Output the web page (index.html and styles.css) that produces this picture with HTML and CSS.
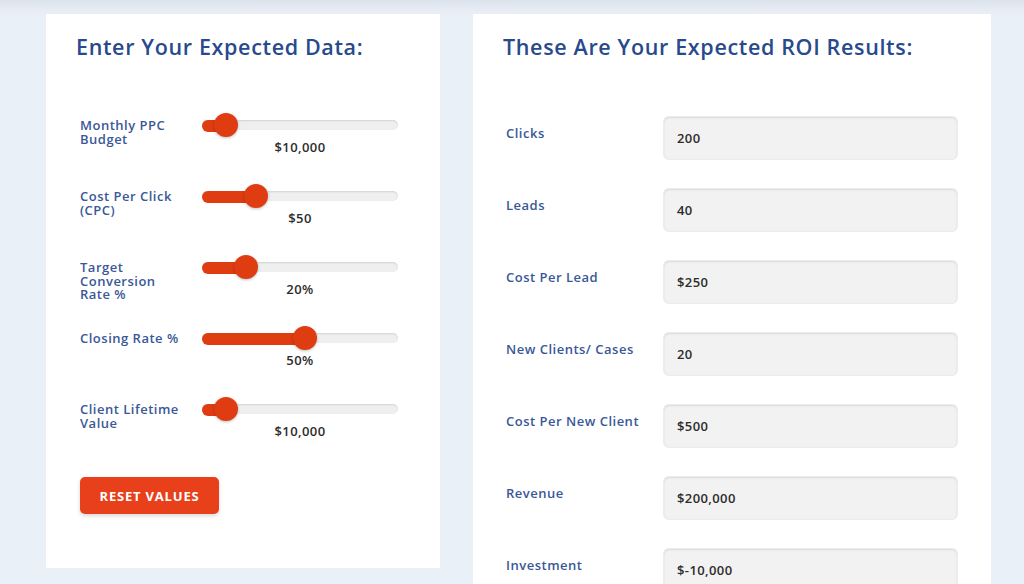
FILE: index.html
```html
<!DOCTYPE html>
<html lang="en">
<head>
  <meta charset="UTF-8">
  <meta name="viewport" content="width=device-width, initial-scale=1.0">
  <title>PPC ROI Calculator</title>
  <link rel="stylesheet" href="styles.css">
</head>
<body>
  <div class="calc">
    <div class="card card-input">
      <h2>Enter Your Expected Data:</h2>
      <div class="sliders">
        <div class="row">
          <div class="label">Monthly PPC<br>Budget</div>
          <div class="slider">
            <div class="track"><div class="fill" style="width: 24px"></div><span class="thumb" style="left: 24px"></span></div>
            <div class="value">$10,000</div>
          </div>
        </div>
        <div class="row">
          <div class="label">Cost Per Click<br>(CPC)</div>
          <div class="slider">
            <div class="track"><div class="fill" style="width: 54px"></div><span class="thumb" style="left: 54px"></span></div>
            <div class="value">$50</div>
          </div>
        </div>
        <div class="row">
          <div class="label">Target<br>Conversion<br>Rate %</div>
          <div class="slider">
            <div class="track"><div class="fill" style="width: 44px"></div><span class="thumb" style="left: 44px"></span></div>
            <div class="value">20%</div>
          </div>
        </div>
        <div class="row">
          <div class="label">Closing Rate %</div>
          <div class="slider">
            <div class="track"><div class="fill" style="width: 103px"></div><span class="thumb" style="left: 103px"></span></div>
            <div class="value">50%</div>
          </div>
        </div>
        <div class="row">
          <div class="label">Client Lifetime<br>Value</div>
          <div class="slider">
            <div class="track"><div class="fill" style="width: 24px"></div><span class="thumb" style="left: 24px"></span></div>
            <div class="value">$10,000</div>
          </div>
        </div>
      </div>
      <button class="btn-reset">RESET VALUES</button>
    </div>

    <div class="card card-result">
      <h2>These Are Your Expected ROI Results:</h2>
      <div class="results">
        <div class="res-row"><div class="label">Clicks</div><div class="box">200</div></div>
        <div class="res-row"><div class="label">Leads</div><div class="box">40</div></div>
        <div class="res-row"><div class="label">Cost Per Lead</div><div class="box">$250</div></div>
        <div class="res-row"><div class="label">New Clients/ Cases</div><div class="box">20</div></div>
        <div class="res-row"><div class="label">Cost Per New Client</div><div class="box">$500</div></div>
        <div class="res-row"><div class="label">Revenue</div><div class="box">$200,000</div></div>
        <div class="res-row"><div class="label">Investment</div><div class="box">$-10,000</div></div>
      </div>
    </div>
  </div>
</body>
</html>
```
FILE: styles.css
```css
* {
  margin: 0;
  padding: 0;
  box-sizing: border-box;
}
body {
  height: 584px;
  overflow: hidden;
  font-family: "Open Sans", "Liberation Sans", sans-serif;
  background: linear-gradient(#dde3ec 0, #e9eef6 12px, #eaf0f8 20px);
}
.calc {
  display: flex;
  align-items: flex-start;
  gap: 33px;
  padding: 14px 0 0 46px;
}
.card {
  background: #fff;
  padding: 21px 30px 0;
}
.card h2 {
  font-size: 21.5px;
  line-height: 24px;
  font-weight: 600;
  color: #284a8c;
  letter-spacing: 0.65px;
}
.card-input {
  width: 394px;
  height: 554px;
}
.card-result {
  width: 518px;
  height: 600px;
}
.label {
  font-size: 13px;
  line-height: 13.5px;
  font-weight: 600;
  color: #3a5897;
  letter-spacing: 0.5px;
}

/* sliders */
.sliders {
  margin-top: 55px;
  padding-left: 4px;
}
.row {
  display: grid;
  grid-template-columns: 122px 196px;
  height: 71px;
}
.row .label {
  padding-top: 5px;
}
.slider {
  padding-top: 7px;
}
.track {
  position: relative;
  height: 10px;
  border-radius: 5px;
  background: #efefef;
  box-shadow: inset 0 1px 2px rgba(0, 0, 0, 0.12);
}
.fill {
  height: 12px;
  margin-top: -1px;
  border-radius: 6px;
  background: #e03c12;
}
.thumb {
  position: absolute;
  top: -7px;
  width: 24px;
  height: 24px;
  margin-left: -12px;
  border-radius: 50%;
  background: #e03c12;
  box-shadow: 0 1px 3px rgba(0, 0, 0, 0.25);
}
.value {
  margin-top: 9px;
  text-align: center;
  font-size: 13px;
  line-height: 16px;
  font-weight: 600;
  color: #2c2c2c;
  letter-spacing: 0.4px;
}
.btn-reset {
  margin: 8px 0 0 4px;
  width: 139px;
  height: 37px;
  border: none;
  border-radius: 5px;
  background: #e8401a;
  color: #fff;
  font-family: inherit;
  font-size: 13px;
  font-weight: 700;
  letter-spacing: 0.8px;
  box-shadow: 0 2px 4px rgba(0, 0, 0, 0.15);
}

/* results */
.results {
  margin-top: 58px;
  padding-left: 3px;
}
.res-row {
  display: grid;
  grid-template-columns: 158px 293px;
  height: 72px;
}
.res-row .label {
  padding-top: 10px;
}
.box {
  height: 42px;
  padding-left: 13px;
  border-radius: 5px;
  background: #f2f2f2;
  box-shadow: inset 0 1px 2px rgba(0, 0, 0, 0.1), 0 0 0 1px #ececec;
  font-size: 13px;
  line-height: 42px;
  font-weight: 600;
  color: #2c2c2c;
  letter-spacing: 0.4px;
}
```
